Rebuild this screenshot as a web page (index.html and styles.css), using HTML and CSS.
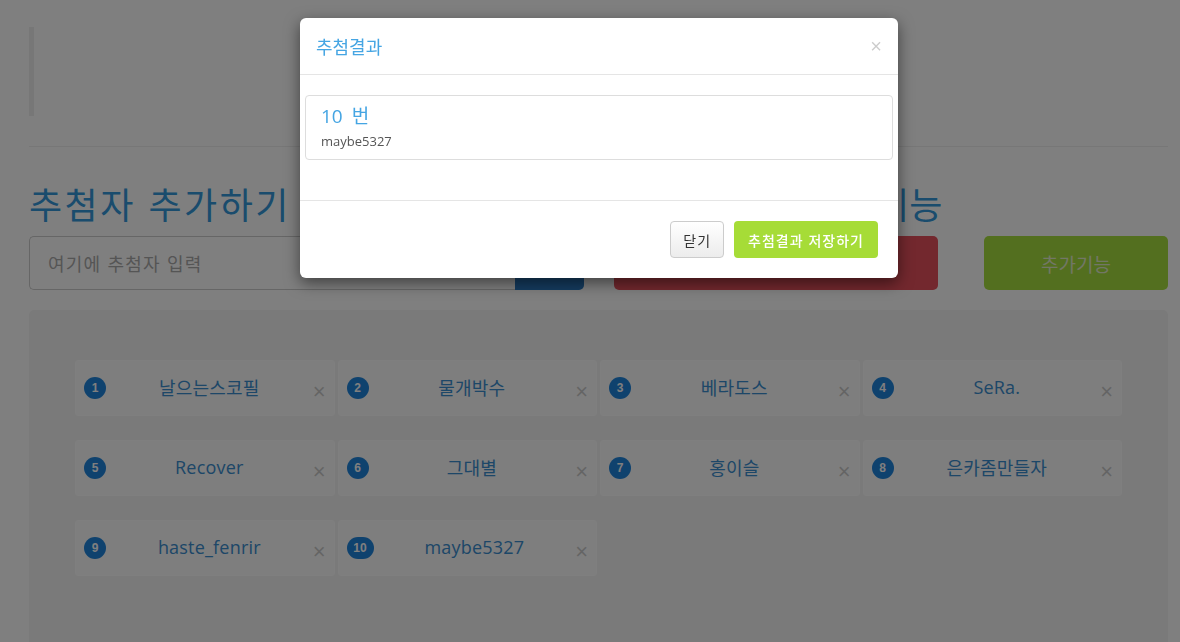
FILE: index.html
```html
<!DOCTYPE html>
<html lang="ko">
<head>
    <meta charset="UTF-8">
    <meta name="viewport" content="width=device-width, initial-scale=1.0">
    <title>추첨기</title>
    <link rel="stylesheet" href="styles.css">
</head>
<body>

    <div class="page">
        <blockquote class="notice"></blockquote>
        <hr class="divider">

        <div class="controls">
            <h1 class="title">추첨자 추가하기</h1>
            <h1 class="title title-right">추첨하기 및 기타 기능</h1>
            <div></div>

            <div class="input-group">
                <input type="text" class="name-input" placeholder="여기에 추첨자 입력">
                <button class="btn btn-blue">추가</button>
            </div>
            <button class="btn btn-red">추첨하기</button>
            <button class="btn btn-green">추가기능</button>
        </div>

        <div class="well">
            <div class="card-grid">
                <div class="card"><span class="badge">1</span><span class="name">날으는스코필</span><span class="close">×</span></div>
                <div class="card"><span class="badge">2</span><span class="name">물개박수</span><span class="close">×</span></div>
                <div class="card"><span class="badge">3</span><span class="name">베라도스</span><span class="close">×</span></div>
                <div class="card"><span class="badge">4</span><span class="name">SeRa.</span><span class="close">×</span></div>
                <div class="card"><span class="badge">5</span><span class="name">Recover</span><span class="close">×</span></div>
                <div class="card"><span class="badge">6</span><span class="name">그대별</span><span class="close">×</span></div>
                <div class="card"><span class="badge">7</span><span class="name">홍이슬</span><span class="close">×</span></div>
                <div class="card"><span class="badge">8</span><span class="name">은카좀만들자</span><span class="close">×</span></div>
                <div class="card"><span class="badge">9</span><span class="name">haste_fenrir</span><span class="close">×</span></div>
                <div class="card"><span class="badge wide">10</span><span class="name">maybe5327</span><span class="close">×</span></div>
            </div>
        </div>
    </div>

    <!-- result modal -->
    <div class="backdrop"></div>
    <div class="modal">
        <div class="modal-dialog">
            <div class="modal-header">
                <h4 class="modal-title">추첨결과</h4>
                <span class="close modal-close">×</span>
            </div>
            <div class="modal-body">
                <div class="result-item">
                    <div class="result-num">10 번</div>
                    <div class="result-name">maybe5327</div>
                </div>
            </div>
            <div class="modal-footer">
                <button class="btn-default">닫기</button>
                <button class="btn-save">추첨결과 저장하기</button>
            </div>
        </div>
    </div>

</body>
</html>
```

FILE: styles.css
```css
body {
    margin: 0;
    font-family: "Open Sans", "Noto Sans CJK KR", sans-serif;
    background-color: #fff;
    color: #333;
    font-size: 14px;
}
.page {
    padding: 27px 12px 0 29px;
}
.notice {
    margin: 0;
    height: 89px;
    border-left: 5px solid #eee;
}
.divider {
    margin: 30px 0 0;
    border: none;
    border-top: 1px solid #eee;
}
.controls {
    display: grid;
    grid-template-columns: 555px 324px 200px;
    column-gap: 30px;
    margin-top: 35px;
}
.controls > :nth-child(3n) {
    margin-left: 16px;
}
.title {
    margin: 0 0 12px;
    font-family: "Noto Sans CJK KR", sans-serif;
    font-weight: 400;
    font-size: 36px;
    line-height: 42px;
    letter-spacing: 2.5px;
    color: #3498db;
    white-space: nowrap;
}
.title-right {
    letter-spacing: 0;
}
.input-group {
    display: flex;
    height: 54px;
}
.name-input {
    flex: 1;
    border: 1px solid #ccc;
    border-right: none;
    border-radius: 5px 0 0 5px;
    padding: 0 18px;
    font-family: "Noto Sans CJK KR", sans-serif;
    font-size: 18px;
    letter-spacing: 1.2px;
    color: #555;
    outline: none;
}
.name-input::placeholder {
    color: #aaa;
}
.btn {
    border: none;
    border-radius: 5px;
    height: 54px;
    font-family: "Noto Sans CJK KR", sans-serif;
    font-size: 19px;
    color: #fff;
}
.btn-blue {
    width: 69px;
    border-radius: 0 5px 5px 0;
    background-color: #2a78c0;
}
.btn-red {
    background-color: #e6505c;
}
.btn-green {
    background-color: #a6de3e;
    color: #e4efcc;
}
.well {
    margin-top: 20px;
    min-height: 400px;
    background-color: #f5f5f5;
    border-radius: 5px;
    padding: 50px 46px;
}
.card-grid {
    display: grid;
    grid-template-columns: repeat(4, 1fr);
    gap: 24px 3px;
}
.card {
    display: flex;
    align-items: center;
    height: 56px;
    box-sizing: border-box;
    padding: 0 8px;
    background-color: #fcfcfc;
    border: 1px solid #fefefe;
    border-radius: 3px;
}
.badge {
    display: inline-block;
    min-width: 22px;
    height: 22px;
    line-height: 22px;
    border-radius: 11px;
    background-color: #1f84dc;
    color: #fff;
    font-family: "Liberation Sans", sans-serif;
    font-size: 12px;
    font-weight: bold;
    text-align: center;
    box-sizing: border-box;
}
.badge.wide {
    min-width: 27px;
}
.name {
    flex: 1;
    text-align: center;
    font-family: "Open Sans", "Noto Sans CJK KR", sans-serif;
    font-size: 18px;
    letter-spacing: 0.2px;
    color: #3a8ed0;
    margin-top: -2px;
}
.close {
    font-family: "Liberation Sans", sans-serif;
    font-size: 22px;
    line-height: 1;
    color: #000;
    opacity: 0.2;
    margin-top: 8px;
}
.backdrop {
    position: fixed;
    inset: 0;
    background-color: rgba(0, 0, 0, 0.5);
}
.modal {
    position: fixed;
    inset: 0;
}
.modal-dialog {
    width: 598px;
    margin: 18px 0 0 300px;
    background-color: #fff;
    border-radius: 6px;
    box-shadow: 0 5px 15px rgba(0, 0, 0, 0.5);
}
.modal-header {
    display: flex;
    align-items: center;
    justify-content: space-between;
    height: 56px;
    padding: 0 16px;
    border-bottom: 1px solid #e5e5e5;
}
.modal-title {
    margin: 0;
    font-family: "Noto Sans CJK KR", sans-serif;
    font-weight: 400;
    font-size: 18px;
    color: #45a5e3;
}
.modal-close {
    margin-top: 0;
    font-size: 20px;
}
.modal-body {
    padding: 20px 5px 40px;
}
.result-item {
    height: 65px;
    box-sizing: border-box;
    border: 1px solid #ddd;
    border-radius: 4px;
    padding: 8px 15px;
}
.result-num {
    font-size: 19px;
    line-height: 24px;
    word-spacing: 4px;
    color: #45a5e3;
}
.result-name {
    margin-top: 4px;
    font-size: 13px;
    line-height: 18px;
    color: #555;
}
.modal-footer {
    display: flex;
    justify-content: flex-end;
    gap: 10px;
    padding: 20px;
    border-top: 1px solid #e5e5e5;
}
.btn-default, .btn-save {
    height: 37px;
    padding: 0 12px;
    border-radius: 4px;
    font-family: "Noto Sans CJK KR", sans-serif;
    font-size: 14px;
    letter-spacing: 1px;
}
.btn-default {
    background: linear-gradient(#fff, #ececec);
    border: 1px solid #ccc;
    color: #333;
}
.btn-save {
    padding: 0 14px;
    background-color: #a6dc37;
    border: none;
    color: #fff;
    font-weight: 500;
}
```
